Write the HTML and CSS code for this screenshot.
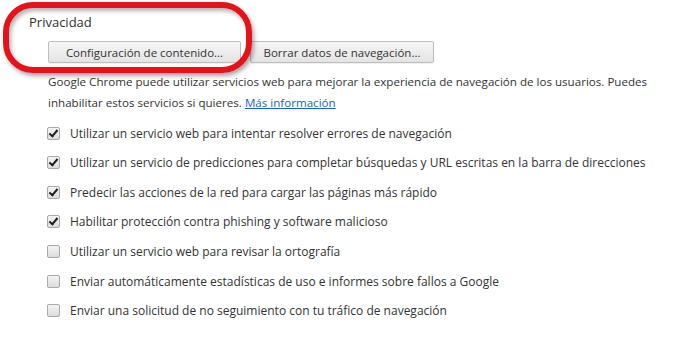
FILE: index.html
```html
<!DOCTYPE html>
<html lang="es">
<head>
<meta charset="utf-8">
<link rel="stylesheet" href="styles.css">
</head>
<body>
<div class="section">
  <h3 class="title">Privacidad</h3>
  <div class="content">
    <div class="buttons">
      <button class="btn btn-content">Configuración de contenido...</button>
      <button class="btn btn-clear">Borrar datos de navegación...</button>
    </div>
    <p class="desc">Google Chrome puede utilizar servicios web para mejorar la experiencia de navegación de los usuarios. Puedes inhabilitar estos servicios si quieres. <a href="#" class="link">Más información</a></p>
    <ul class="checks">
      <li class="row"><span class="box checked"></span><span class="label">Utilizar un servicio web para intentar resolver errores de navegación</span></li>
      <li class="row"><span class="box checked"></span><span class="label">Utilizar un servicio de predicciones para completar búsquedas y URL escritas en la barra de direcciones</span></li>
      <li class="row"><span class="box checked"></span><span class="label">Predecir las acciones de la red para cargar las páginas más rápido</span></li>
      <li class="row"><span class="box checked"></span><span class="label">Habilitar protección contra phishing y software malicioso</span></li>
      <li class="row"><span class="box"></span><span class="label">Utilizar un servicio web para revisar la ortografía</span></li>
      <li class="row"><span class="box"></span><span class="label">Enviar automáticamente estadísticas de uso e informes sobre fallos a Google</span></li>
      <li class="row"><span class="box"></span><span class="label">Enviar una solicitud de no seguimiento con tu tráfico de navegación</span></li>
    </ul>
  </div>
</div>
<div class="ring"></div>
</body>
</html>
```
FILE: styles.css
```css
html, body {
  margin: 0;
  padding: 0;
  background: #fff;
}
body {
  width: 700px;
  height: 344px;
  overflow: hidden;
  position: relative;
  font-family: "Open Sans", "Noto Sans", sans-serif;
  font-size: 11.5px;
  color: #333;
}
.section {
  padding-left: 29px;
  padding-top: 13px;
}
.title {
  margin: 0;
  font-size: 13px;
  font-weight: normal;
  line-height: 18px;
  color: #303030;
}
.content {
  margin-left: 19px;
}
.buttons {
  display: flex;
  gap: 9px;
  margin-top: 10px;
}
.btn {
  height: 22px;
  padding: 0;
  border: 1px solid #bdbdbd;
  border-radius: 2px;
  background: linear-gradient(#f6f6f6, #e4e4e4);
  font-family: inherit;
  font-size: 11.5px;
  color: #333;
  box-shadow: 0 1px 0 rgba(0,0,0,0.06);
}
.btn-content { width: 193px; }
.btn-clear { width: 184px; }
.desc {
  margin: 7.5px 0 0 0;
  line-height: 21px;
  width: 640px;
  font-size: 11.6px;
}
.link {
  color: #1a5fd0;
  text-decoration: underline;
}
.checks {
  list-style: none;
  margin: 5.7px 0 0 0;
  padding: 0;
  font-size: 12px;
}
.row {
  display: flex;
  align-items: center;
  height: 29.67px;
}
.box {
  width: 11px;
  height: 11px;
  border: 1px solid #a9a9a9;
  border-radius: 2px;
  background: linear-gradient(#f4f4f4, #dcdcdc);
  margin-left: -1px;
  margin-right: 10px;
  position: relative;
  flex: none;
}
.box.checked::after {
  content: "";
  position: absolute;
  left: 3px;
  top: 0px;
  width: 3px;
  height: 7px;
  border-right: 2.5px solid #1e1e1e;
  border-bottom: 2.5px solid #1e1e1e;
  transform: rotate(40deg);
}
.label {
  white-space: nowrap;
}
.ring {
  position: absolute;
  left: 3px;
  top: 2px;
  width: 237px;
  height: 59px;
  border: 6px solid #e5121a;
  border-radius: 30px;
  box-shadow: 2px 3px 4px rgba(0,0,0,0.35), inset 2px 3px 4px rgba(0,0,0,0.3);
}
```
